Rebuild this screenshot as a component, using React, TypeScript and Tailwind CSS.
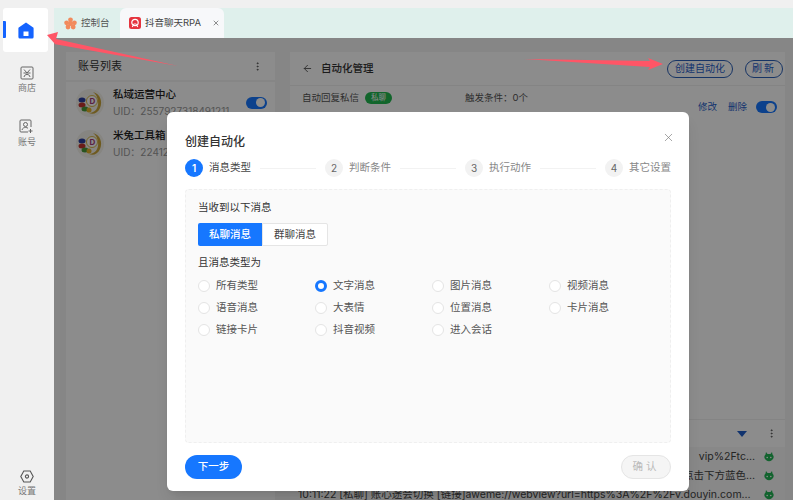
import { ArrowLeft, EllipsisVertical, X } from "lucide-react";

const FONT = "font-['Inter','Noto_Sans_CJK_SC',sans-serif]";

const HomeIcon = () => (
  <svg width="16" height="17" viewBox="0 0 16 17">
    <path
      fillRule="evenodd"
      d="M8 0.5 L15.2 5.6 a1 1 0 0 1 .4 .8 V15 a1.5 1.5 0 0 1 -1.5 1.5 H1.9 A1.5 1.5 0 0 1 .4 15 V6.4 a1 1 0 0 1 .4 -.8 Z M5.5 9.5 V14 H10.5 V9.5 Z"
      fill="#1463ff"
    />
  </svg>
);

const StoreIcon = () => (
  <svg width="14" height="14" viewBox="0 0 14 14" fill="none" stroke="#666" strokeWidth="1">
    <rect x="1" y="1" width="12" height="12" rx="1" />
    <path d="M4 3.5 L7 7 L10 3.5 M7 7 H3.5 M7 7 H10.5 M4 11 C4.5 9 5.5 8.5 7 8.5 C8.5 8.5 9.5 9 10 11" />
  </svg>
);

const AccountIcon = () => (
  <svg width="15" height="15" viewBox="0 0 15 15" fill="none" stroke="#666" strokeWidth="1">
    <path d="M9 13 H2 a1 1 0 0 1 -1 -1 V2 a1 1 0 0 1 1 -1 H11 a1 1 0 0 1 1 1 V8" />
    <circle cx="6.5" cy="5.5" r="2" />
    <path d="M3 11 C3.5 9 5 8.5 6.5 8.5 C7.5 8.5 8.3 8.7 9 9.2 M11.5 10 V14 M9.5 12 H13.5" />
  </svg>
);

const SettingIcon = () => (
  <svg width="14" height="13" viewBox="0 0 14 13" fill="none" stroke="#555" strokeWidth="1.1">
    <path d="M3.8 1 H10.2 L13.2 6.5 L10.2 12 H3.8 L.8 6.5 Z" />
    <circle cx="7" cy="6.5" r="1.6" />
  </svg>
);

const PuzzleIcon = () => (
  <svg width="13" height="13" viewBox="0 0 13 13" fill="#f28a5c">
    <circle cx="6.5" cy="2.8" r="2.4" />
    <circle cx="2.6" cy="5.8" r="2.4" />
    <circle cx="10.4" cy="5.8" r="2.4" />
    <circle cx="4" cy="10" r="2.4" />
    <circle cx="9.2" cy="10" r="2.4" />
    <circle cx="6.5" cy="6.5" r="2.5" />
  </svg>
);

const DouyinIcon = () => (
  <svg width="12" height="12" viewBox="0 0 12 12">
    <rect width="12" height="12" rx="2.5" fill="#e5343f" />
    <circle cx="6" cy="5.5" r="3.2" fill="none" stroke="#fff" strokeWidth="1.2" />
    <path d="M3.2 10 L5.5 6.5 M8.8 10 L6.5 6.5" stroke="#fff" strokeWidth="1.1" />
  </svg>
);

const Avatar = () => (
  <svg width="28" height="28" viewBox="0 0 28 28" className="shrink-0">
    <circle cx="14" cy="14" r="14" fill="#f4f2ec" />
    <path d="M17 3 C24 5 27 12 24 19 C22 24 17 26 13 24 C19 24 23 19 22 12 C21.500 8 20 5 17 3 Z" fill="#c9a53a" />
    <circle cx="16" cy="12" r="5.500" fill="#fff" stroke="#d9b84a" strokeWidth="1" />
    <text x="13.500" y="15" fontSize="8" fontWeight="700" fill="#a33a7a" fontFamily="Inter, sans-serif">D</text>
    <ellipse cx="6" cy="11" rx="3.500" ry="2.500" fill="#2b3f9e" />
    <ellipse cx="6" cy="16" rx="3.500" ry="2.500" fill="#c2342f" />
    <ellipse cx="9" cy="20" rx="3.500" ry="2.500" fill="#4a9a3a" />
    <ellipse cx="13" cy="21" rx="2.500" ry="2.500" fill="#e2b12a" />
  </svg>
);

const RobotIcon = () => (
  <svg width="12" height="12" viewBox="0 0 12 12" fill="#22b455" className="shrink-0">
    <path d="M3 1 L4.500 3 H7.500 L9 1 L9.500 3.500 A4.500 4 0 1 1 2.500 3.500 Z" />
    <circle cx="4.200" cy="6.500" r=".8" fill="#fff" />
    <circle cx="7.800" cy="6.500" r=".8" fill="#fff" />
  </svg>
);

const Toggle = () => (
  <div className="flex h-3 w-[21px] items-center justify-end rounded-full bg-[#1677ff] pr-[2px]">
    <div className="size-[9px] rounded-full bg-white" />
  </div>
);

const NavItem = ({ icon, label }: { icon: React.ReactNode; label: string }) => (
  <div className="flex flex-col items-center">
    {icon}
    <span className="mt-[2px] text-[9px] leading-3 text-[#777]">{label}</span>
  </div>
);

const AccountRow = ({ name, uid }: { name: string; uid: string }) => (
  <div className="flex h-[41px] items-center pl-[10px] pr-2">
    <Avatar />
    <div className="ml-[9px] min-w-0 flex-1">
      <div className="text-[10.500px] font-medium leading-4 text-[#222]">{name}</div>
      <div className="truncate text-[10px] leading-4 text-[#999]">UID：{uid}</div>
    </div>
    <Toggle />
  </div>
);

const Step = ({ n, label, active }: { n: number; label: string; active?: boolean }) => (
  <div className="flex items-center gap-[6px]">
    <div
      className={
        active
          ? "flex size-[18px] items-center justify-center rounded-full bg-[#1677ff] text-[10px] font-semibold text-white"
          : "flex size-[18px] items-center justify-center rounded-full bg-[#f2f2f2] text-[10px] text-[#666]"
      }
    >
      {n}
    </div>
    <span className={active ? "text-[10.500px] text-[#444]" : "text-[10.500px] text-[#888]"}>{label}</span>
  </div>
);

const StepLine = () => <div className="mx-[9px] h-px flex-1 bg-[#f2f2f2]" />;

const options = [
  "所有类型", "文字消息", "图片消息", "视频消息",
  "语音消息", "大表情", "位置消息", "卡片消息",
  "链接卡片", "抖音视频", "进入会话",
];

const Radio = ({ label, checked }: { label: string; checked?: boolean }) => (
  <div className="flex h-[22px] items-center gap-[6px]">
    {checked ? (
      <div className="size-3 rounded-full border-[3.500px] border-[#1677ff] bg-white" />
    ) : (
      <div className="size-3 rounded-full border border-[#e4e4e4] bg-white" />
    )}
    <span className="text-[10.500px] text-[#555]">{label}</span>
  </div>
);

const LogRow = ({ text }: { text: string }) => (
  <div className="flex h-[19px] shrink-0 items-center gap-2 pl-2 pr-[10px]">
    <span className="min-w-0 flex-1 truncate text-right text-[10.500px] text-[#444]">{text}</span>
    <RobotIcon />
  </div>
);

const Modal = () => (
  <div className="absolute left-[113px] top-[74px] flex h-[379px] w-[522px] flex-col rounded-[6px] bg-white px-[18px] shadow-lg">
    <div className="flex h-[46px] items-end justify-between pb-[6px]">
      <span className="text-[12px] font-medium leading-5 text-[#333]">创建自动化</span>
      <X size={13} strokeWidth={1.200} color="#777" className="mb-2 mr-[-4px]" />
    </div>
    <div className="flex h-[20px] items-center">
      <Step n={1} label="消息类型" active />
      <StepLine />
      <Step n={2} label="判断条件" />
      <StepLine />
      <Step n={3} label="执行动作" />
      <StepLine />
      <Step n={4} label="其它设置" />
    </div>
    <div className="mt-[11px] h-[254px] rounded-[4px] border border-dashed border-[#efefef] bg-[#fafafa] px-3 pt-[10px]">
      <div className="text-[10.500px] leading-4 text-[#333]">当收到以下消息</div>
      <div className="mt-[7px] flex h-[23px] w-[130px] text-[10.500px]">
        <div className="flex flex-1 items-center justify-center rounded-l-[2px] bg-[#1677ff] font-medium text-white">私聊消息</div>
        <div className="flex flex-1 items-center justify-center rounded-r-[2px] border border-[#e5e5e5] bg-white text-[#444]">群聊消息</div>
      </div>
      <div className="mt-[9px] text-[10.500px] leading-4 text-[#333]">且消息类型为</div>
      <div className="mt-[4px] grid grid-cols-[117px_117px_117px_117px] pl-[-1px]">
        {options.map((o) => (
          <Radio key={o} label={o} checked={o === "文字消息"} />
        ))}
      </div>
    </div>
    <div className="mt-3 flex justify-between">
      <button className="h-6 w-[57px] rounded-full bg-[#1677ff] text-[10.500px] font-medium text-white">下一步</button>
      <button className="h-6 w-[50px] rounded-full border border-[#e5e5e5] bg-[#f5f5f5] text-[10.500px] tracking-[3px] text-[#bbb]">确认</button>
    </div>
  </div>
);

export default function App() {
  return (
    <div className={`relative flex h-[500px] w-[793px] overflow-hidden bg-[#f0f0f0] ${FONT}`}>
      <aside className="flex w-[54px] shrink-0 flex-col items-center bg-[#f0f0f0] pb-[3px] pt-2">
        <div className="relative ml-[-3px] flex h-11 w-[45px] items-center justify-center rounded-[3px] bg-white">
          <div className="absolute left-0 top-[13px] h-[17px] w-[3px] rounded-r-[1px] bg-[#1463ff]" />
          <HomeIcon />
        </div>
        <div className="mt-[14px]">
          <NavItem icon={<StoreIcon />} label="商店" />
        </div>
        <div className="mt-[25px]">
          <NavItem icon={<AccountIcon />} label="账号" />
        </div>
        <div className="mt-auto">
          <NavItem icon={<SettingIcon />} label="设置" />
        </div>
      </aside>

      <main className="flex min-w-0 flex-1 flex-col pt-2">
        <div className="flex h-[30px] shrink-0 bg-[#dff0ec]">
          <div className="flex w-[66px] items-center gap-[4px] pl-[10px]">
            <PuzzleIcon />
            <span className="text-[9.500px] text-[#555]">控制台</span>
          </div>
          <div className="flex w-[104px] items-center gap-1 rounded-t-[6px] bg-[#f7f8fa] pl-[9px]">
            <DouyinIcon />
            <span className="text-[9.500px] text-[#444]">抖音聊天RPA</span>
            <X size={8} strokeWidth={1.800} color="#444" className="ml-[7px]" />
          </div>
        </div>

        <div className="relative flex min-h-0 flex-1 gap-[15px] bg-[#f4f4f4] pl-3 pr-2 pt-[14px]">
          <section className="flex w-[209px] shrink-0 flex-col">
            <div className="flex h-[28px] items-center justify-between bg-white pl-[12px] pr-3">
              <span className="text-[11px] text-[#333]">账号列表</span>
              <EllipsisVertical size={11} color="#555" />
            </div>
            <div className="mt-[2px] flex-1 bg-white">
              <AccountRow name="私域运营中心" uid="2557927318491211" />
              <AccountRow name="米兔工具箱" uid="2241270912" />
            </div>
          </section>

          <section className="flex min-w-0 flex-1 flex-col bg-white">
            <div className="flex h-[34px] shrink-0 items-center border-b border-[#f0f0f0] pl-3 pr-[2px]">
              <ArrowLeft size={11} color="#555" />
              <span className="ml-2 text-[10.500px] font-medium text-[#333]">自动化管理</span>
              <button className="ml-auto h-[18px] w-[66px] rounded-full border border-[#2b5fb8] text-[10px] text-[#1f5ec9]">创建自动化</button>
              <button className="ml-3 h-[18px] w-[38px] rounded-full border border-[#2b5fb8] text-[10px] tracking-[2px] text-[#1f5ec9]">刷新</button>
            </div>
            <div className="flex h-[36px] shrink-0 pl-3 pr-2 pt-[2px]">
              <div className="flex w-[163px] items-start gap-[6px]">
                <span className="text-[9.500px] leading-5 text-[#555]">自动回复私信</span>
                <span className="mt-[4px] flex h-3 w-[27px] items-center justify-center rounded-full bg-[#1fb84f] text-[7.500px] text-white">私聊</span>
              </div>
              <span className="text-[9.500px] leading-5 text-[#555]">触发条件：0个</span>
              <div className="ml-auto mt-[13px] flex h-3 items-center gap-[11px] text-[9.500px] text-[#1f5ec9]">
                <span>修改</span>
                <span>删除</span>
                <div className="ml-[-2px]">
                  <Toggle />
                </div>
              </div>
            </div>
            <div className="mt-auto flex h-[28px] shrink-0 items-center justify-end border-t border-[#f0f0f0] pr-[8px]">
              <div className="mr-[19px] h-0 w-0 border-x-[5px] border-t-[6px] border-x-transparent border-t-[#1f5ec9]" />
              <EllipsisVertical size={11} color="#555" />
            </div>
            <div className="h-[53px] shrink-0 overflow-hidden bg-[#f7f7f7]">
              <LogRow text="vip%2Ftc…" />
              <LogRow text="点击下方蓝色…" />
              <LogRow text="10:11:22 [私聊] 账心途会切换 [链接]aweme://webview?url=https%3A%2F%2Fv.douyin.com%…" />
            </div>
          </section>

          <div className="absolute inset-0 bg-black/45" />
          <Modal />
        </div>
      </main>

      <svg className="pointer-events-none absolute inset-0" width="793" height="500" viewBox="0 0 793 500">
        <polygon points="47,35 58,32 56,39 178,66 54,44 55,44" fill="#ff5566" />
        <polygon points="524,59 650,61 648,58 663,64 648,70 650,67" fill="#ff5566" />
      </svg>
    </div>
  );
}
